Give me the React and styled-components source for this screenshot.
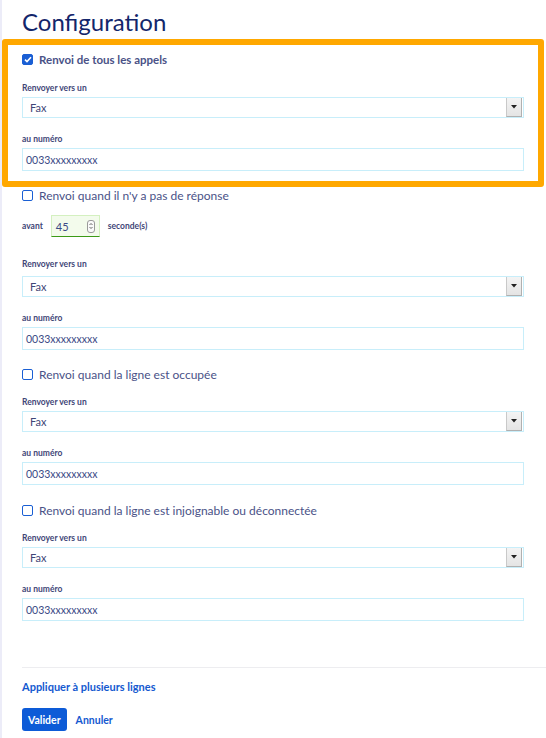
import React from 'react';
import styled, { createGlobalStyle } from 'styled-components';

const GlobalStyle = createGlobalStyle`
  html, body {
    margin: 0;
    padding: 0;
    background: #ffffff;
  }
  body {
    font-family: Lato, "Open Sans", "Liberation Sans", sans-serif;
  }
`;

const Page = styled.div`
  min-height: 738px;
  box-sizing: border-box;
  border-left: 2px solid #ececf8;
  padding: 4px 0 0 20px;
`;

const Content = styled.div`
  padding-right: 22px;
`;

const Title = styled.h1`
  margin: 0;
  font-size: 24px;
  font-weight: 400;
  line-height: 35px;
  color: #13266b;
`;

const Highlight = styled.div`
  margin: 0 -20px;
  border: 6px solid #ffa800;
  border-radius: 3px;
  padding: 6px 14px 10px;
`;

const Section = styled.div`
  padding-top: ${(p) => p.$top || 0}px;
`;

const CheckRow = styled.label`
  display: flex;
  align-items: center;
  gap: 6px;
  height: 16px;
  font-size: ${(p) => (p.$bold ? 11.5 : 12)}px;
  font-weight: ${(p) => (p.$bold ? 700 : 400)};
  color: #4a5287;
`;

const Box = styled.span`
  width: 11px;
  height: 11px;
  box-sizing: border-box;
  border-radius: 2px;
  border: 1.5px solid #1a5fd4;
  background: ${(p) => (p.$checked ? '#1a5fd4' : '#fff')};
  display: flex;
  align-items: center;
  justify-content: center;
`;

const FieldLabel = styled.div`
  margin-top: ${(p) => p.$gap}px;
  font-size: 8.5px;
  font-weight: 700;
  line-height: 12px;
  color: #3f4677;
`;

const SelectBox = styled.div`
  margin-top: ${(p) => p.$gap || 3}px;
  height: 21px;
  box-sizing: border-box;
  border: 1px solid #c8eefa;
  display: flex;
  align-items: stretch;
  font-size: 11px;
  color: #3f4677;
`;

const SelectText = styled.span`
  flex: 1;
  display: flex;
  align-items: center;
  padding-left: 7px;
`;

const SelectArrow = styled.span`
  width: 14px;
  margin: 0 1px 0 0;
  background: linear-gradient(#f4f4f4, #e4e4e4);
  border-left: 1px solid #c9c9c9;
  border-right: 1px solid #b0b0b0;
  border-bottom: 1px solid #b0b0b0;
  display: flex;
  align-items: center;
  justify-content: center;
`;

const TextInput = styled.div`
  margin-top: 3px;
  height: 23px;
  box-sizing: border-box;
  border: 1px solid #c8eefa;
  padding-left: 3px;
  display: flex;
  align-items: center;
  font-size: 10.5px;
  color: #3b4a86;
`;

const DelayRow = styled.div`
  margin-top: 12px;
  display: flex;
  align-items: center;
  gap: 8px;
  font-size: 8.5px;
  font-weight: 700;
  color: #3f4677;
`;

const NumberBox = styled.div`
  width: 49px;
  height: 22px;
  box-sizing: border-box;
  background: #f3fbec;
  border: 1px solid #d4f0c0;
  border-bottom: 1.5px solid #3b9a16;
  display: flex;
  align-items: center;
  justify-content: space-between;
  padding: 0 4px 0 4px;
  font-size: 11px;
  font-weight: 400;
  color: #3b4a86;
`;

const Spinner = styled.span`
  width: 8px;
  height: 13px;
  box-sizing: border-box;
  border: 1px solid #9a9a9a;
  border-radius: 3px;
  background: #fafafa;
  display: flex;
  align-items: center;
  justify-content: center;
`;

const Footer = styled.div`
  margin-top: 46px;
  border-top: 1px solid #ededf0;
  padding-top: 12px;
`;

const Link = styled.a`
  display: block;
  font-size: 11px;
  font-weight: 700;
  color: #1459d0;
  text-decoration: none;
`;

const Actions = styled.div`
  margin-top: 15px;
  display: flex;
  align-items: center;
  gap: 9px;
`;

const Primary = styled.button`
  height: 23px;
  padding: 0 6px;
  border: none;
  border-radius: 3px;
  background: #0d5bd7;
  color: #fff;
  font-family: inherit;
  font-size: 10.5px;
  font-weight: 700;
`;

const Cancel = styled.span`
  font-size: 10.5px;
  font-weight: 700;
  color: #1459d0;
`;

const Check = ({ checked }) => (
  <Box $checked={checked}>
    {checked && (
      <svg width="8" height="7" viewBox="0 0 8 7">
        <path d="M1 3.6 L3 5.5 L7 1.2" fill="none" stroke="#fff" strokeWidth="1.6" />
      </svg>
    )}
  </Box>
);

function Forward({ top, selectGap }) {
  return (
    <>
      <FieldLabel $gap={top}>Renvoyer vers un</FieldLabel>
      <SelectBox $gap={selectGap}>
        <SelectText>Fax</SelectText>
        <SelectArrow>
          <svg width="6" height="4" viewBox="0 0 6 4">
            <path d="M0 0 H6 L3 3.5 Z" fill="#222" />
          </svg>
        </SelectArrow>
      </SelectBox>
      <FieldLabel $gap={15}>au numéro</FieldLabel>
      <TextInput>0033xxxxxxxxx</TextInput>
    </>
  );
}

export default function App() {
  return (
    <Page>
      <GlobalStyle />
      <Title>Configuration</Title>
      <Content>
        <Highlight>
          <CheckRow $bold>
            <Check checked />
            Renvoi de tous les appels
          </CheckRow>
          <Forward top={15} />
        </Highlight>
        <Section $top={0}>
          <CheckRow>
            <Check />
            Renvoi quand il n'y a pas de réponse
          </CheckRow>
          <DelayRow>
            avant
            <NumberBox>
              45
              <Spinner>
                <svg width="4" height="8" viewBox="0 0 4 8">
                  <path d="M0.5 3 L2 1.5 L3.5 3 M0.5 5 L2 6.5 L3.5 5" fill="none" stroke="#444" strokeWidth="0.8" />
                </svg>
              </Spinner>
            </NumberBox>
            seconde(s)
          </DelayRow>
          <Forward top={21} selectGap={6} />
        </Section>
        <Section $top={16}>
          <CheckRow>
            <Check />
            Renvoi quand la ligne est occupée
          </CheckRow>
          <Forward top={14} />
        </Section>
        <Section $top={17}>
          <CheckRow>
            <Check />
            Renvoi quand la ligne est injoignable ou déconnectée
          </CheckRow>
          <Forward top={14} />
        </Section>
      </Content>
      <Footer>
        <Link href="#">Appliquer à plusieurs lignes</Link>
        <Actions>
          <Primary>Valider</Primary>
          <Cancel>Annuler</Cancel>
        </Actions>
      </Footer>
    </Page>
  );
}
